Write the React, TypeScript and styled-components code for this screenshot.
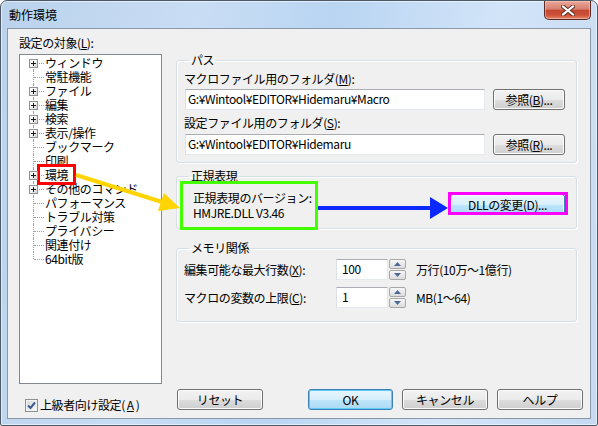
import React from 'react';
import styled, { createGlobalStyle } from 'styled-components';

const GlobalStyle = createGlobalStyle`
  html, body { margin: 0; padding: 0; background: #ffffff; }
  body {
    font-family: "Noto Sans CJK JP", "Liberation Sans", sans-serif;
    font-size: 12px;
    letter-spacing: -0.4px;
    color: #000;
  }
  #root { width: 598px; height: 426px; }
`;

const Window = styled.div`
  position: relative;
  box-sizing: border-box;
  width: 598px;
  height: 426px;
  display: flex;
  flex-direction: column;
  padding: 0 6px 6px 6px;
  border: 1px solid #4e5967;
  border-radius: 7px 7px 2px 2px;
  background: linear-gradient(100deg, #bad2ec 0%, #c9ddf4 30%, #b9d5f2 50%, #d2e4f8 75%, #c5daf1 100%);
  box-shadow: inset 0 0 0 1px rgba(255, 255, 255, 0.55);
`;

const TitleBar = styled.div`
  height: 27px;
  display: flex;
  padding-left: 2px;
`;

const Title = styled.span`
  line-height: 27px;
  font-size: 12px;
  letter-spacing: 0;
`;

const CloseButton = styled.div`
  margin-left: auto;
  box-sizing: border-box;
  width: 47px;
  height: 19px;
  display: flex;
  align-items: center;
  justify-content: center;
  border: 1px solid #5a2b24;
  border-top: none;
  border-radius: 0 0 5px 5px;
  background: linear-gradient(#e9a899 0%, #d88070 45%, #c4472f 52%, #cc5238 78%, #e3876c 100%);
  box-shadow: inset 0 0 0 1px rgba(255, 210, 200, 0.5);
`;

const Client = styled.div`
  flex: 1;
  display: flex;
  flex-direction: column;
  padding: 7px 7px 0 11px;
  background: #f0f0f0;
  border: 1px solid #8b98a8;
`;

const Main = styled.div`
  display: flex;
  height: 348px;
`;

const LeftCol = styled.div`
  width: 143px;
  display: flex;
  flex-direction: column;
`;

const RightCol = styled.div`
  width: 401px;
  margin-left: 14px;
  margin-top: 18px;
  display: flex;
  flex-direction: column;
`;

const Label = styled.div<{ $top?: number }>`
  line-height: 14px;
  margin-top: ${p => p.$top ?? 0}px;
  white-space: nowrap;
`;

const TreeBox = styled.div`
  flex: 1;
  margin-top: 4px;
  box-sizing: border-box;
  padding-top: 1px;
  background: #fff;
  border: 1px solid #828790;
`;

const TreeRow = styled.div<{ $first?: boolean; $last?: boolean }>`
  position: relative;
  height: 14px;
  line-height: 14px;
  padding-left: 25px;
  white-space: nowrap;

  &::before {
    content: '';
    position: absolute;
    left: 13px;
    top: ${p => (p.$first ? '7px' : '0')};
    height: ${p => (p.$first || p.$last ? '7px' : '14px')};
    border-left: 1px dotted #a0a0a0;
  }

  &::after {
    content: '';
    position: absolute;
    left: 14px;
    top: 7px;
    width: 10px;
    border-top: 1px dotted #a0a0a0;
  }
`;

const Expander = styled.span`
  position: absolute;
  left: 9px;
  top: 3px;
  z-index: 1;
  box-sizing: border-box;
  width: 9px;
  height: 9px;
  border: 1px solid #919191;
  background: linear-gradient(135deg, #ffffff 30%, #d4d4d4 100%);

  &::before {
    content: '';
    position: absolute;
    left: 1px;
    top: 3px;
    width: 5px;
    height: 1px;
    background: #1a1a1a;
  }

  &::after {
    content: '';
    position: absolute;
    left: 3px;
    top: 1px;
    width: 1px;
    height: 5px;
    background: #1a1a1a;
  }
`;

const Group = styled.fieldset<{ $top?: number; $bottom: number }>`
  margin: ${p => p.$top ?? 0}px 0 0 0;
  padding: 0 11px ${p => p.$bottom}px 7px;
  min-width: 0;
  border: 1px solid #d5dfe5;
  border-radius: 3px;
  box-shadow: inset 1px 1px 0 #fff, 1px 1px 0 #fff;
`;

const Legend = styled.legend`
  margin-left: 5px;
  padding: 0 2px;
  line-height: 12px;
  height: 12px;
`;

const FieldRow = styled.div<{ $top: number }>`
  display: flex;
  align-items: center;
  margin-top: ${p => p.$top}px;
`;

const TextBox = styled.div<{ $w: number; $pad: number }>`
  box-sizing: border-box;
  width: ${p => p.$w}px;
  height: 21px;
  line-height: 18px;
  padding-left: ${p => p.$pad}px;
  background: #fff;
  border: 1px solid #e3e9ef;
  border-top-color: #abadb3;
  border-left-color: #dbdfe6;
  white-space: nowrap;
  overflow: hidden;
`;

const Button = styled.button<{ $w: number; $kind?: 'default' | 'hot' }>`
  box-sizing: border-box;
  width: ${p => p.$w}px;
  height: 21px;
  padding: 0;
  font: inherit;
  letter-spacing: inherit;
  line-height: 18px;
  color: #000;
  border-radius: 3px;
  border: 1px solid ${p => (p.$kind ? '#3c7fb1' : '#707070')};
  background: ${p =>
    p.$kind === 'default'
      ? 'linear-gradient(#e6f5fd 0%, #d6effc 50%, #bfe5fa 51%, #aadbf5 100%)'
      : p.$kind === 'hot'
      ? 'linear-gradient(#eaf6fd 0%, #d9f0fc 50%, #bee6fd 51%, #a7d9f5 100%)'
      : 'linear-gradient(#f2f2f2 0%, #ebebeb 50%, #dddddd 51%, #cfcfcf 100%)'};
  box-shadow: inset 0 0 0 1px ${p => (p.$kind === 'default' ? '#5fcaf8' : p.$kind ? '#f4fbff' : '#fcfcfc')};
  white-space: nowrap;
`;

const RegexRow = styled.div`
  display: flex;
  margin-top: 8px;
`;

const RegexText = styled.div`
  margin-left: 9px;
  line-height: 15px;
`;

const SpinLabel = styled.div`
  width: 152px;
  line-height: 14px;
  white-space: nowrap;
`;

const SpinButtons = styled.div`
  display: flex;
  flex-direction: column;
  gap: 1px;
  margin-left: 1px;
  height: 21px;
`;

const SpinArrow = styled.div`
  box-sizing: border-box;
  width: 17px;
  height: 10px;
  display: flex;
  align-items: center;
  justify-content: center;
  border: 1px solid #a8a8a8;
  border-radius: 2px;
  background: linear-gradient(#f6f6f6, #dcdcdc);
`;

const Unit = styled.span`
  margin-left: 10px;
  line-height: 14px;
  white-space: nowrap;
`;

const Footer = styled.div`
  display: flex;
  align-items: flex-start;
  margin-top: 5px;
`;

const CheckWrap = styled.label`
  width: 152px;
  margin-left: 6px;
  margin-top: 9px;
  display: flex;
  align-items: center;
  gap: 2px;
  line-height: 14px;
  white-space: nowrap;
`;

const CheckBox = styled.span`
  box-sizing: border-box;
  width: 13px;
  height: 13px;
  display: flex;
  align-items: center;
  justify-content: center;
  border: 1px solid #8e8f8f;
  background: linear-gradient(135deg, #d8d8d8, #f8f8f8);
  box-shadow: inset 0 0 0 1px #f4f4f4;
`;

const ButtonGroup = styled.div`
  margin-left: auto;
  display: flex;
  gap: 9px;
`;

const Overlay = styled.svg`
  position: absolute;
  left: -1px;
  top: -1px;
  pointer-events: none;
`;

const tree: { label: string; plus: boolean }[] = [
  { label: 'ウィンドウ', plus: true },
  { label: '常駐機能', plus: false },
  { label: 'ファイル', plus: true },
  { label: '編集', plus: true },
  { label: '検索', plus: true },
  { label: '表示/操作', plus: true },
  { label: 'ブックマーク', plus: false },
  { label: '印刷', plus: false },
  { label: '環境', plus: true },
  { label: 'その他のコマンド', plus: true },
  { label: 'パフォーマンス', plus: false },
  { label: 'トラブル対策', plus: false },
  { label: 'プライバシー', plus: false },
  { label: '関連付け', plus: false },
  { label: '64bit版', plus: false },
];

const U = styled.span`
  text-decoration: underline;
`;

const Spinner: React.FC<{ value: string }> = ({ value }) => (
  <>
    <TextBox $w={52} $pad={5}>{value}</TextBox>
    <SpinButtons>
      <SpinArrow>
        <svg width="7" height="4" viewBox="0 0 7 4"><path d="M0 4 L3.5 0 L7 4 Z" fill="#4b6a9a" /></svg>
      </SpinArrow>
      <SpinArrow>
        <svg width="7" height="4" viewBox="0 0 7 4"><path d="M0 0 L3.5 4 L7 0 Z" fill="#4b6a9a" /></svg>
      </SpinArrow>
    </SpinButtons>
  </>
);

export default function App() {
  return (
    <>
      <GlobalStyle />
      <Window>
        <TitleBar>
          <Title>動作環境</Title>
          <CloseButton>
            <svg width="14" height="11" viewBox="0 0 14 11">
              <path d="M2 1.5 L12 9.5 M12 1.5 L2 9.5" stroke="#5a2a20" strokeWidth="4" strokeLinecap="square" />
              <path d="M2 1.5 L12 9.5 M12 1.5 L2 9.5" stroke="#ffffff" strokeWidth="2.2" strokeLinecap="square" />
            </svg>
          </CloseButton>
        </TitleBar>
        <Client>
          <Main>
            <LeftCol>
              <Label>設定の対象(<U>L</U>):</Label>
              <TreeBox>
                {tree.map((item, i) => (
                  <TreeRow key={item.label} $first={i === 0} $last={i === tree.length - 1}>
                    {item.plus && <Expander />}
                    {item.label}
                  </TreeRow>
                ))}
              </TreeBox>
            </LeftCol>
            <RightCol>
              <Group $bottom={7}>
                <Legend>パス</Legend>
                <Label $top={6}>マクロファイル用のフォルダ(<U>M</U>):</Label>
                <FieldRow $top={3}>
                  <TextBox $w={300} $pad={2} style={{ marginLeft: 1 }}>G:¥Wintool¥EDITOR¥Hidemaru¥Macro</TextBox>
                  <Button $w={72} style={{ marginLeft: 'auto' }}>参照(<U>B</U>)...</Button>
                </FieldRow>
                <Label $top={6}>設定ファイル用のフォルダ(<U>S</U>):</Label>
                <FieldRow $top={4}>
                  <TextBox $w={300} $pad={2} style={{ marginLeft: 1 }}>G:¥Wintool¥EDITOR¥Hidemaru</TextBox>
                  <Button $w={72} style={{ marginLeft: 'auto' }}>参照(<U>R</U>)...</Button>
                </FieldRow>
              </Group>
              <Group $top={7} $bottom={8}>
                <Legend>正規表現</Legend>
                <RegexRow>
                  <RegexText>
                    正規表現のバージョン:
                    <br />
                    HMJRE.DLL V3.46
                  </RegexText>
                  <Button $w={115} $kind="hot" style={{ marginLeft: 'auto', marginTop: 4 }}>DLLの変更(D)...</Button>
                </RegexRow>
              </Group>
              <Group $top={13} $bottom={13}>
                <Legend>メモリ関係</Legend>
                <FieldRow $top={5}>
                  <SpinLabel>編集可能な最大行数(<U>X</U>):</SpinLabel>
                  <Spinner value="100" />
                  <Unit>万行(10万～1億行)</Unit>
                </FieldRow>
                <FieldRow $top={7}>
                  <SpinLabel>マクロの変数の上限(<U>C</U>):</SpinLabel>
                  <Spinner value="1" />
                  <Unit>MB(1～64)</Unit>
                </FieldRow>
              </Group>
            </RightCol>
          </Main>
          <Footer>
            <CheckWrap>
              <CheckBox>
                <svg width="9" height="9" viewBox="0 0 9 9">
                  <path d="M1 4.5 L3.5 7 L8 1.5" fill="none" stroke="#3c5a96" strokeWidth="2" />
                </svg>
              </CheckBox>
              上級者向け設定(<U>A</U>)
            </CheckWrap>
            <Button $w={86}>リセット</Button>
            <ButtonGroup>
              <Button $w={85} $kind="default">OK</Button>
              <Button $w={86}>キャンセル</Button>
              <Button $w={86}>ヘルプ</Button>
            </ButtonGroup>
          </Footer>
        </Client>
        <Overlay width="598" height="426" viewBox="0 0 598 426">
          <rect x="38.5" y="165.5" width="36" height="18" fill="none" stroke="#ff0000" strokeWidth="3" />
          <line x1="76" y1="175" x2="162" y2="202" stroke="#ffd400" strokeWidth="4" />
          <polygon points="180,208 158,211 164,193" fill="#ffd400" />
          <rect x="181.5" y="182.5" width="135" height="46" fill="none" stroke="#44ff00" strokeWidth="3" />
          <line x1="318" y1="208" x2="432" y2="208" stroke="#0a28ff" strokeWidth="4" />
          <polygon points="448,208 430,197 430,219" fill="#0a28ff" />
          <rect x="449.5" y="193.5" width="117" height="20" fill="none" stroke="#ff00ff" strokeWidth="3" />
        </Overlay>
      </Window>
    </>
  );
}
